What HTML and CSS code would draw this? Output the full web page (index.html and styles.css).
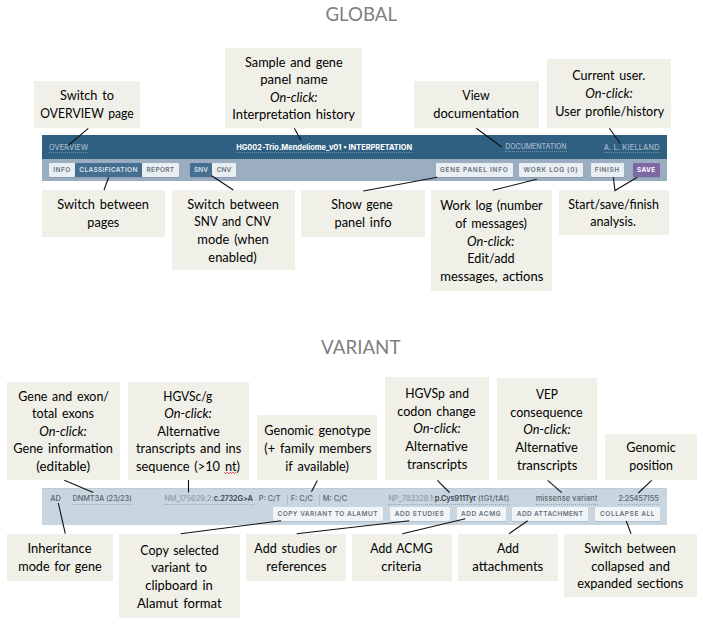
FILE: index.html
```html
<!DOCTYPE html>
<html lang="en">
<head>
<meta charset="utf-8">
<title>Interface overview</title>
<link rel="stylesheet" href="styles.css">
</head>
<body>
<main class="page">
  <section class="section global">
    <header class="topbar">
      <a class="link overview">OVERVIEW</a>
      <a class="link sample">HG002-Trio.Mendeliome_v01 • INTERPRETATION</a>
      <a class="link docs">DOCUMENTATION</a>
      <a class="link user">A. L. KIELLAND</a>
    </header>
    <nav class="toolbar">
      <div class="group pages"><button class="btn info">INFO</button><button class="btn active classification">CLASSIFICATION</button><button class="btn report">REPORT</button></div>
      <div class="group modes"><button class="btn active snv">SNV</button><button class="btn cnv">CNV</button></div>
      <div class="actions">
        <button class="btn panel-info">GENE PANEL INFO</button>
        <button class="btn work-log">WORK LOG (0)</button>
        <button class="btn finish">FINISH</button>
        <button class="btn save">SAVE</button>
      </div>
    </nav>
  </section>
  <section class="section variant">
    <div class="meta">
      <span class="ad">AD</span>
      <span class="dotted gene">DNMT3A (23/23)</span>
      <span class="dotted hgvsc"><span class="ref nm">NM_175629.2:</span><b>c.2732G&gt;A</b></span>
      <span class="gt p">P: C/T</span>
      <span class="gt f">F: C/C</span>
      <span class="gt m">M: C/C</span>
      <span class="dotted hgvsp"><span class="ref np">NP_783328.1:</span><b>p.Cys911Tyr</b> <span class="codon">(tGt/tAt)</span></span>
      <span class="dotted vep">missense variant</span>
      <span class="dotted position">2:25457155</span>
    </div>
    <div class="variant-actions">
      <button class="btn copy">COPY VARIANT TO ALAMUT</button>
      <button class="btn studies">ADD STUDIES</button>
      <button class="btn acmg">ADD ACMG</button>
      <button class="btn attach">ADD ATTACHMENT</button>
      <button class="btn collapse">COLLAPSE ALL</button>
    </div>
  </section>

  <svg class="annotations" width="703" height="624" viewBox="0 0 703 624">
    <g class="title">
      <text x="325.5" y="21" textLength="71.5" lengthAdjust="spacingAndGlyphs">GLOBAL</text>
      <text x="321" y="354" textLength="79.5" lengthAdjust="spacingAndGlyphs">VARIANT</text>
    </g>
    <g class="boxes">
      <rect x="34" y="81" width="106" height="47"/>
      <rect x="225" y="48" width="137" height="80"/>
      <rect x="414" y="81" width="125" height="47"/>
      <rect x="547" y="59" width="124" height="69"/>
      <rect x="42" y="190" width="123" height="47"/>
      <rect x="172" y="190" width="123" height="80"/>
      <rect x="301" y="190" width="124" height="47"/>
      <rect x="431" y="190" width="121" height="101"/>
      <rect x="559" y="190" width="110" height="45"/>
      <rect x="7" y="382" width="113" height="98"/>
      <rect x="128" y="382" width="121" height="98"/>
      <rect x="257" y="415" width="120" height="65"/>
      <rect x="385" y="377" width="104" height="103"/>
      <rect x="497" y="378" width="100" height="102"/>
      <rect x="605" y="434" width="92" height="46"/>
      <rect x="7" y="534" width="106" height="47"/>
      <rect x="119" y="534" width="121" height="84"/>
      <rect x="246" y="534" width="100" height="47"/>
      <rect x="352" y="534" width="100" height="47"/>
      <rect x="458" y="534" width="100" height="47"/>
      <rect x="564" y="534" width="133" height="63"/>
    </g>
    <g class="copy-text">
      <text x="60" y="100" textLength="54" lengthAdjust="spacingAndGlyphs">Switch to</text>
      <text x="40.3" y="118" textLength="93.4" lengthAdjust="spacingAndGlyphs">OVERVIEW page</text>
      <text x="245" y="67" textLength="97.7" lengthAdjust="spacingAndGlyphs">Sample and gene</text>
      <text x="260.3" y="84" textLength="67.4" lengthAdjust="spacingAndGlyphs">panel name</text>
      <text class="em" x="270" y="102" textLength="47.5" lengthAdjust="spacingAndGlyphs">On-click:</text>
      <text x="232.3" y="119" textLength="122.7" lengthAdjust="spacingAndGlyphs">Interpretation history</text>
      <text x="462.3" y="100" textLength="27.4" lengthAdjust="spacingAndGlyphs">View</text>
      <text x="433.3" y="118" textLength="85.7" lengthAdjust="spacingAndGlyphs">documentation</text>
      <text x="572.3" y="80" textLength="73" lengthAdjust="spacingAndGlyphs">Current user.</text>
      <text class="em" x="585.3" y="98" textLength="47.5" lengthAdjust="spacingAndGlyphs">On-click:</text>
      <text x="555.3" y="116" textLength="109" lengthAdjust="spacingAndGlyphs">User profile/history</text>

      <text x="57.3" y="209" textLength="91.7" lengthAdjust="spacingAndGlyphs">Switch between</text>
      <text x="87.3" y="227" textLength="32" lengthAdjust="spacingAndGlyphs">pages</text>
      <text x="187.3" y="209" textLength="91.7" lengthAdjust="spacingAndGlyphs">Switch between</text>
      <text x="194.3" y="226" textLength="76.4" lengthAdjust="spacingAndGlyphs">SNV and CNV</text>
      <text x="197.3" y="244" textLength="71.4" lengthAdjust="spacingAndGlyphs">mode (when</text>
      <text x="208.3" y="262" textLength="48.4" lengthAdjust="spacingAndGlyphs">enabled)</text>
      <text x="331.3" y="209" textLength="61.4" lengthAdjust="spacingAndGlyphs">Show gene</text>
      <text x="334.5" y="227" textLength="57" lengthAdjust="spacingAndGlyphs">panel info</text>
      <text x="440.3" y="210" textLength="102.4" lengthAdjust="spacingAndGlyphs">Work log (number</text>
      <text x="455.3" y="228" textLength="71.7" lengthAdjust="spacingAndGlyphs">of messages)</text>
      <text class="em" x="467" y="246" textLength="47.5" lengthAdjust="spacingAndGlyphs">On-click:</text>
      <text x="467.3" y="263" textLength="47.4" lengthAdjust="spacingAndGlyphs">Edit/add</text>
      <text x="440.3" y="281" textLength="103" lengthAdjust="spacingAndGlyphs">messages, actions</text>
      <text x="568.3" y="209" textLength="90.7" lengthAdjust="spacingAndGlyphs">Start/save/finish</text>
      <text x="590.3" y="226" textLength="45.7" lengthAdjust="spacingAndGlyphs">analysis.</text>

      <text x="18.3" y="401" textLength="90.7" lengthAdjust="spacingAndGlyphs">Gene and exon/</text>
      <text x="32" y="418" textLength="62" lengthAdjust="spacingAndGlyphs">total exons</text>
      <text class="em" x="39.3" y="436" textLength="47.5" lengthAdjust="spacingAndGlyphs">On-click:</text>
      <text x="13.3" y="453" textLength="99.7" lengthAdjust="spacingAndGlyphs">Gene information</text>
      <text x="36.3" y="471" textLength="53.7" lengthAdjust="spacingAndGlyphs">(editable)</text>
      <text x="163.3" y="401" textLength="49" lengthAdjust="spacingAndGlyphs">HGVSc/g</text>
      <text class="em" x="164.3" y="418" textLength="47.5" lengthAdjust="spacingAndGlyphs">On-click:</text>
      <text x="157.3" y="436" textLength="62.4" lengthAdjust="spacingAndGlyphs">Alternative</text>
      <text x="136" y="453" textLength="105.3" lengthAdjust="spacingAndGlyphs">transcripts and ins</text>
      <text x="136" y="471" textLength="104" lengthAdjust="spacingAndGlyphs">sequence (&gt;10 nt)</text>
      <text x="264.3" y="435" textLength="106.4" lengthAdjust="spacingAndGlyphs">Genomic genotype</text>
      <text x="264.3" y="453" textLength="107" lengthAdjust="spacingAndGlyphs">(+ family members</text>
      <text x="285.3" y="471" textLength="63.7" lengthAdjust="spacingAndGlyphs">if available)</text>
      <text x="405.3" y="398" textLength="63.7" lengthAdjust="spacingAndGlyphs">HGVSp and</text>
      <text x="397.3" y="416" textLength="78.4" lengthAdjust="spacingAndGlyphs">codon change</text>
      <text class="em" x="413.3" y="433" textLength="47.5" lengthAdjust="spacingAndGlyphs">On-click:</text>
      <text x="405.3" y="451" textLength="62.4" lengthAdjust="spacingAndGlyphs">Alternative</text>
      <text x="407" y="469" textLength="60.3" lengthAdjust="spacingAndGlyphs">transcripts</text>
      <text x="536" y="399" textLength="22" lengthAdjust="spacingAndGlyphs">VEP</text>
      <text x="510.3" y="417" textLength="72.4" lengthAdjust="spacingAndGlyphs">consequence</text>
      <text class="em" x="523.3" y="434" textLength="47.5" lengthAdjust="spacingAndGlyphs">On-click:</text>
      <text x="515.3" y="452" textLength="62.4" lengthAdjust="spacingAndGlyphs">Alternative</text>
      <text x="517" y="470" textLength="60.3" lengthAdjust="spacingAndGlyphs">transcripts</text>
      <text x="626.3" y="452" textLength="49.4" lengthAdjust="spacingAndGlyphs">Genomic</text>
      <text x="629.3" y="470" textLength="43.7" lengthAdjust="spacingAndGlyphs">position</text>

      <text x="27.5" y="553" textLength="64" lengthAdjust="spacingAndGlyphs">Inheritance</text>
      <text x="18.3" y="571" textLength="83.4" lengthAdjust="spacingAndGlyphs">mode for gene</text>
      <text x="140.3" y="555" textLength="78.4" lengthAdjust="spacingAndGlyphs">Copy selected</text>
      <text x="151.3" y="572" textLength="55.7" lengthAdjust="spacingAndGlyphs">variant to</text>
      <text x="145.3" y="590" textLength="67.4" lengthAdjust="spacingAndGlyphs">clipboard in</text>
      <text x="137" y="608" textLength="84.7" lengthAdjust="spacingAndGlyphs">Alamut format</text>
      <text x="254.3" y="553" textLength="82.4" lengthAdjust="spacingAndGlyphs">Add studies or</text>
      <text x="266.3" y="571" textLength="60" lengthAdjust="spacingAndGlyphs">references</text>
      <text x="370.3" y="553" textLength="62.4" lengthAdjust="spacingAndGlyphs">Add ACMG</text>
      <text x="381.3" y="571" textLength="40" lengthAdjust="spacingAndGlyphs">criteria</text>
      <text x="497" y="553" textLength="22" lengthAdjust="spacingAndGlyphs">Add</text>
      <text x="472.3" y="571" textLength="71" lengthAdjust="spacingAndGlyphs">attachments</text>
      <text x="584.3" y="553" textLength="91.7" lengthAdjust="spacingAndGlyphs">Switch between</text>
      <text x="591.3" y="571" textLength="78.7" lengthAdjust="spacingAndGlyphs">collapsed and</text>
      <text x="577.3" y="588" textLength="106" lengthAdjust="spacingAndGlyphs">expanded sections</text>
    </g>
    <path class="squiggle" d="M224 472.2l1.5 1.5 1.5-1.5 1.5 1.5 1.5-1.5 1.5 1.5 1.5-1.5 1.5 1.5 1.5-1.5"/>
    <path class="leaders" d="M88.3 128.3L68 145.5M294.3 128.3L301 140.3M476.3 128.3L501.7 147M609.3 128.3L620.3 143.5M108.7 177.3L104 190M211.7 175.7L233.3 190M437.3 177.3L363.3 191M536.7 179.3L492.7 190.3M613.3 177.3L615 190.5L637.3 177.3M64.3 480.3L93.3 492.5M188.5 480V492.5M317.3 480.5L311.5 491.7M437.3 480.3L449.5 492.5M547.7 480.3L561.7 492.7M651.7 480.3L638.3 493M58.3 503L65.3 533.7M281 520.7L180.7 533.7M409.3 520.7L296.7 533.7M465.3 518.7L402.3 533.7M527.7 520.7L509 533.7M626.3 521L631 533.7"/>
  </svg>
</main>
</body>
</html>
```

FILE: styles.css
```css
* { box-sizing: border-box; }
body { margin: 0; background: #fff; font-family: Inter, "Liberation Sans", sans-serif; }
.page { position: relative; width: 703px; height: 624px; padding: 135px 36px 0 42px; overflow: hidden; }
.section { width: 625px; }

/* Global bars */
.topbar { display: flex; height: 24px; padding: 8px 7px 0; background: #2f5f81; font-size: 7.4px; line-height: 9px; font-weight: 500; color: #a3b8c8; white-space: nowrap; }
.link { height: 10px; border-bottom: 1px dotted #6d90aa; }
.overview { width: 39.3px; letter-spacing: .04px; }
.sample { width: 177px; margin-left: 148px; color: #fff; font-weight: 700; }
.docs { width: 61.5px; margin: -1px 0 0 92.5px; font-size: 7px; letter-spacing: -.06px; }
.user { width: 56.5px; margin-left: 37px; letter-spacing: .17px; }
.toolbar { display: flex; height: 22px; padding: 4px 7px 0; background: #9aadc1; }
.group { display: flex; }
.modes { margin-left: 11px; }
.actions { display: flex; margin-left: auto; }
.btn { display: block; height: 14px; margin: 0; padding: 0; border: 0; border-radius: 1px; background: #e9eef2; color: #65717c; font: 600 6.5px/14px Inter, "Liberation Sans", sans-serif; text-align: center; white-space: nowrap; box-shadow: 0 1px 1px rgba(50, 70, 95, .15); }
.active { background: #456f91; color: #d9e4ec; }
.info { width: 26px; letter-spacing: .45px; }
.classification { width: 67px; letter-spacing: .32px; }
.report { width: 37px; letter-spacing: .34px; }
.snv { width: 22px; }
.cnv { width: 24px; }
.panel-info { width: 77.5px; letter-spacing: .74px; }
.work-log { width: 64px; margin-left: 6px; letter-spacing: .73px; }
.finish { width: 33.5px; margin-left: 7.5px; letter-spacing: .56px; }
.save { width: 27.5px; margin-left: 8.5px; letter-spacing: .25px; background: #7d68a3; color: #fff; font-weight: 700; }

/* Variant bar */
.variant { height: 37px; margin-top: 307px; background: #c9d6df; border-top: 1px solid #bdccd7; }
.meta { display: flex; height: 18px; padding: 5px 0 0 8.3px; font-size: 7.4px; line-height: 9px; font-weight: 500; color: #5b6670; white-space: nowrap; }
.meta > span { flex: none; height: 11px; }
.dotted { border-bottom: 1px dotted #9aabb8; }
.ad { width: 10.3px; }
.gene { width: 59px; margin-left: 12px; letter-spacing: -.14px; }
.hgvsc { width: 89.5px; margin-left: 32.6px; }
.ref { font-weight: 400; color: #84929e; }
.meta b { font-weight: 600; color: #3b4650; letter-spacing: -.17px; }
.nm { letter-spacing: .08px; }
.np { letter-spacing: -.04px; }
.gt { border-left: 1px solid #aebdc9; }
.p { width: 27px; margin-left: 4px; border-color: transparent; }
.f { width: 28px; margin-left: 2px; padding-left: 3px; }
.m { width: 30px; margin-left: 4px; padding-left: 3px; }
.hgvsp { width: 122.3px; margin-left: 39.5px; }
.codon { letter-spacing: .3px; }
.vep { width: 62px; margin-left: 25.2px; letter-spacing: .13px; }
.position { width: 41px; margin-left: 20.6px; letter-spacing: -.14px; }
.variant-actions { display: flex; justify-content: flex-end; padding-right: 7px; }
.variant-actions .btn { background: #f1f5f8; }
.copy { width: 110.5px; letter-spacing: .5px; }
.studies { width: 60px; margin-left: 6.5px; letter-spacing: .55px; }
.acmg { width: 49px; margin-left: 7px; letter-spacing: .54px; }
.attach { width: 76.5px; margin-left: 6.3px; letter-spacing: .38px; }
.collapse { width: 65px; margin-left: 6.7px; letter-spacing: .6px; }

/* Callouts and leader lines lying over the bars */
.annotations { position: absolute; left: 0; top: 0; }
.annotations text { font-family: Lato, "Open Sans", sans-serif; white-space: pre; }
.title text { font-size: 19.6px; fill: #7f7f7f; }
.copy-text text { font-size: 13.2px; word-spacing: 1.6px; fill: #000; }
.copy-text .em { font-style: italic; }
.boxes rect { fill: #f0f0e8; }
.squiggle { fill: none; stroke: #e3262b; stroke-width: .9; }
.leaders { fill: none; stroke: #111; stroke-width: 1.1; }
```
